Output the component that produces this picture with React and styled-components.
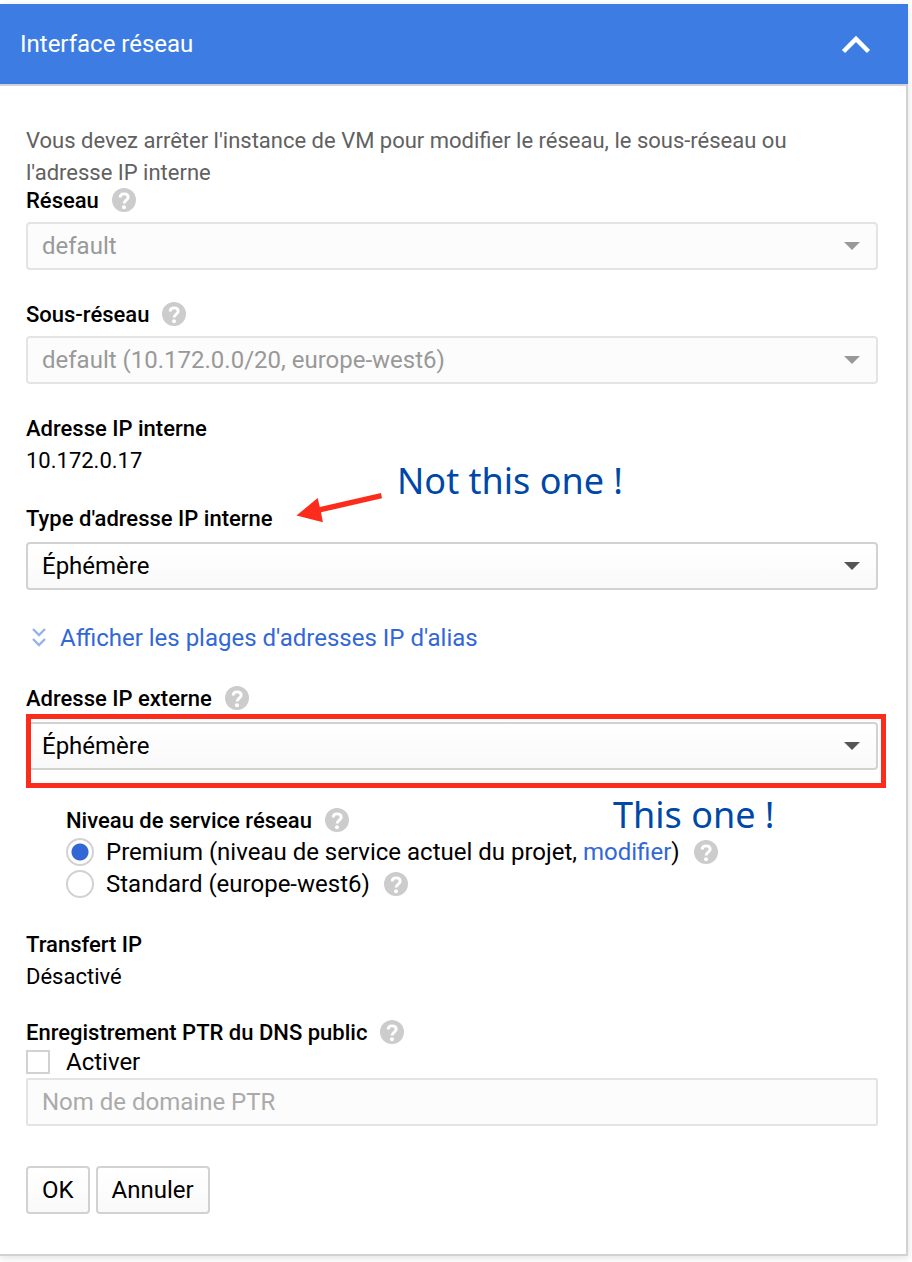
import React, { useState } from "react";
import styled, { createGlobalStyle } from "styled-components";

const GlobalStyle = createGlobalStyle`
  * { box-sizing: border-box; }
  body {
    margin: 0;
    background: #fff;
    color: #000;
    font-family: Roboto, "Liberation Sans", sans-serif;
    font-size: 24px;
    line-height: 32px;
  }
`;

const Page = styled.main`
  padding: 4px 4px 6px 0;
`;

const Panel = styled.section`
  background: #fff;
  box-shadow: 0 2px 8px rgba(0, 0, 0, 0.12);
`;

const Header = styled.header`
  display: flex;
  align-items: center;
  justify-content: space-between;
  height: 80px;
  padding: 0 36px 0 20px;
  background: #3d7de3;
  color: #fff;
`;

const Title = styled.h1`
  margin: 0;
  font-size: 24px;
  font-weight: 400;
`;

const CollapseButton = styled.button`
  display: flex;
  padding: 0;
  border: 0;
  background: none;
  color: inherit;
  cursor: pointer;
`;

const Body = styled.form`
  padding: 38px 28px 40px 26px;
  border: solid #d2d2d2;
  border-width: 2px 2px 2px 0;
`;

const Notice = styled.p`
  max-width: 800px;
  height: 64px;
  margin: 0;
  padding-top: 1px;
  color: #616161;
  font-size: 22px;
`;

const Field = styled.div`
  position: relative;
  margin-top: ${(p) => p.$before ?? 32}px;
  padding-left: ${(p) => (p.$indented ? 40 : 0)}px;
`;

const LabelRow = styled.div`
  display: flex;
  align-items: center;
  gap: 13px;
  height: 24px;
  margin-bottom: ${(p) => p.$after}px;
`;

const FieldLabel = styled.label`
  padding-top: 2px;
  font-size: 22px;
  font-weight: 500;
`;

const Value = styled.div`
  height: 32px;
  padding-top: 1px;
  font-size: 22px;
`;

const HelpButton = styled.button`
  display: flex;
  padding: 0;
  border: 0;
  background: none;
  cursor: pointer;
`;

const SelectFrame = styled.div`
  position: relative;
  color: ${(p) => (p.$disabled ? "#999" : "#555")};
`;

const Select = styled.select`
  display: block;
  width: 100%;
  height: 48px;
  padding: 0 48px 0 14px;
  border: 2px solid #d2d2d2;
  border-radius: 4px;
  appearance: none;
  background: linear-gradient(#fff, #f9f9f9);
  color: #000;
  font: inherit;

  &:disabled {
    border-color: #e4e4e4;
    background: #fcfcfc;
    color: #999;
    opacity: 1;
  }
`;

const SelectArrow = styled.svg`
  position: absolute;
  top: 20px;
  right: 18px;
  pointer-events: none;
`;

const TextLink = styled.a`
  color: #3367d6;
  text-decoration: none;
`;

const AliasLink = styled(TextLink)`
  display: flex;
  align-items: center;
  gap: 14px;
  margin-top: 32px;
  padding-left: 6px;
`;

const Option = styled.div`
  display: flex;
  align-items: center;
  height: 32px;
`;

const OptionHelp = styled.span`
  margin-left: 14px;
`;

const Radio = styled.input`
  width: 28px;
  height: 28px;
  margin: 0 12px 0 0;
  border: 2px solid #d2d2d2;
  border-radius: 50%;
  appearance: none;
  background: #fff;

  &:checked {
    background: radial-gradient(circle, #3367d6 8px, #fff 9px);
  }
`;

const Checkbox = styled.input`
  width: 24px;
  height: 24px;
  margin: 0 16px 0 0;
  border: 2px solid #d2d2d2;
  appearance: none;
  background: #fff;

  &:checked {
    background: #3367d6;
  }
`;

const OptionLabel = styled.label`
  white-space: pre;
`;

const TextInput = styled.input`
  display: block;
  width: 100%;
  height: 48px;
  padding: 0 14px;
  border: 2px solid #e4e4e4;
  border-radius: 2px;
  background: #fcfcfc;
  font: inherit;

  &::placeholder {
    color: #aaa;
    opacity: 1;
  }
`;

const Actions = styled.div`
  display: flex;
  gap: 6px;
  margin-top: 40px;
`;

const ActionButton = styled.button`
  height: 48px;
  padding: 0 14px;
  border: 2px solid #d2d2d2;
  border-radius: 4px;
  background: linear-gradient(#fff, #f9f9f9);
  color: #000;
  font: inherit;
  cursor: pointer;
`;

const Annotation = styled.span`
  position: absolute;
  top: ${(p) => p.$top}px;
  left: ${(p) => p.$left}px;
  color: #0048a8;
  font-family: "Noto Sans", "Open Sans", sans-serif;
  font-size: 36px;
  line-height: 48px;
  white-space: nowrap;
  pointer-events: none;
`;

const AnnotationArrow = styled.svg`
  position: absolute;
  top: -16px;
  left: 268px;
  pointer-events: none;
`;

const Highlight = styled.div`
  position: absolute;
  inset: 28px -8px -18px 0;
  border: 5px solid #fc2c1c;
  pointer-events: none;
`;

function Help({ topic }) {
  return (
    <HelpButton type="button" aria-label={`Aide : ${topic}`}>
      <svg width="24" height="24" viewBox="0 0 24 24" aria-hidden="true">
        <circle cx="12" cy="12" r="12" fill="#ccc" />
        <path
          d="M8.200 9.500C8.200 7.200 9.800 5.900 12.100 5.900s4.100 1.300 4.100 3.400c0 2.700-4.100 3.100-4.100 6.300"
          fill="none"
          stroke="#fff"
          strokeWidth="2.900"
        />
        <circle cx="12" cy="19.2" r="2" fill="#fff" />
      </svg>
    </HelpButton>
  );
}

function Dropdown({ id, value, disabled }) {
  return (
    <SelectFrame $disabled={disabled}>
      <Select id={id} disabled={disabled}>
        <option>{value}</option>
      </Select>
      <SelectArrow width="16" height="8" viewBox="0 0 16 8" aria-hidden="true">
        <path d="M0 0h16L8 8z" fill="currentColor" />
      </SelectArrow>
    </SelectFrame>
  );
}

export default function App() {
  const [tier, setTier] = useState("premium");
  const [ptr, setPtr] = useState(false);

  return (
    <Page>
      <GlobalStyle />
      <Panel>
        <Header>
          <Title>Interface réseau</Title>
          <CollapseButton type="button" aria-label="Réduire">
            <svg width="32" height="24" viewBox="0 0 32 24" aria-hidden="true">
              <path d="M3.5 19.5L16 7l12.500 12.500" fill="none" stroke="#fff" strokeWidth="4.500" />
            </svg>
          </CollapseButton>
        </Header>
        <Body onSubmit={(e) => e.preventDefault()}>
          <Notice>
            Vous devez arrêter l'instance de VM pour modifier le réseau, le sous-réseau ou l'adresse IP interne
          </Notice>

          <Field $before={0}>
            <LabelRow $after={10}>
              <FieldLabel htmlFor="network">Réseau</FieldLabel>
              <Help topic="réseau" />
            </LabelRow>
            <Dropdown id="network" value="default" disabled />
          </Field>

          <Field>
            <LabelRow $after={10}>
              <FieldLabel htmlFor="subnet">Sous-réseau</FieldLabel>
              <Help topic="sous-réseau" />
            </LabelRow>
            <Dropdown id="subnet" value="default (10.172.0.0/20, europe-west6)" disabled />
          </Field>

          <Field>
            <LabelRow $after={4}>
              <FieldLabel as="span">Adresse IP interne</FieldLabel>
            </LabelRow>
            <Value>10.172.0.17</Value>
          </Field>

          <Field $before={30}>
            <LabelRow $after={12}>
              <FieldLabel htmlFor="internal-type">Type d'adresse IP interne</FieldLabel>
            </LabelRow>
            <Dropdown id="internal-type" value="Éphémère" />
            <AnnotationArrow width="92" height="36" viewBox="0 0 92 36" aria-hidden="true">
              <path d="M2.500 25.500L23.700 8L25.800 16.900L87 3L88 8.300L27 22.300L28.900 32.200z" fill="#fc2c1c" />
            </AnnotationArrow>
            <Annotation $top={-49} $left={371}>Not this one !</Annotation>
          </Field>

          <AliasLink href="#alias">
            <svg width="14" height="20" viewBox="0 0 14 20" aria-hidden="true">
              <path d="M1 1l6 6 6-6M1 11l6 6 6-6" fill="none" stroke="#94b2ec" strokeWidth="2.400" />
            </svg>
            Afficher les plages d'adresses IP d'alias
          </AliasLink>

          <Field>
            <LabelRow $after={12}>
              <FieldLabel htmlFor="external-ip">Adresse IP externe</FieldLabel>
              <Help topic="adresse IP externe" />
            </LabelRow>
            <Dropdown id="external-ip" value="Éphémère" />
            <Highlight />
          </Field>

          <Field $before={38} $indented role="radiogroup" aria-labelledby="tier-label">
            <LabelRow $after={4}>
              <FieldLabel as="span" id="tier-label">Niveau de service réseau</FieldLabel>
              <Help topic="niveau de service réseau" />
            </LabelRow>
            <Option>
              <Radio
                type="radio"
                id="premium"
                name="tier"
                checked={tier === "premium"}
                onChange={() => setTier("premium")}
              />
              <OptionLabel htmlFor="premium">{"Premium (niveau de service actuel du projet, "}</OptionLabel>
              <TextLink href="#modifier">modifier</TextLink>)
              <OptionHelp><Help topic="premium" /></OptionHelp>
            </Option>
            <Option>
              <Radio
                type="radio"
                id="standard"
                name="tier"
                checked={tier === "standard"}
                onChange={() => setTier("standard")}
              />
              <OptionLabel htmlFor="standard">Standard (europe-west6)</OptionLabel>
              <OptionHelp><Help topic="standard" /></OptionHelp>
            </Option>
            <Annotation $top={-17} $left={587}>This one !</Annotation>
          </Field>

          <Field>
            <LabelRow $after={4}>
              <FieldLabel as="span">Transfert IP</FieldLabel>
            </LabelRow>
            <Value>Désactivé</Value>
          </Field>

          <Field $before={28}>
            <LabelRow $after={2}>
              <FieldLabel htmlFor="ptr-name">Enregistrement PTR du DNS public</FieldLabel>
              <Help topic="enregistrement PTR" />
            </LabelRow>
            <Option>
              <Checkbox type="checkbox" id="ptr" checked={ptr} onChange={() => setPtr(!ptr)} />
              <OptionLabel htmlFor="ptr">Activer</OptionLabel>
            </Option>
            <TextInput id="ptr-name" placeholder="Nom de domaine PTR" disabled={!ptr} />
          </Field>

          <Actions>
            <ActionButton type="submit">OK</ActionButton>
            <ActionButton type="button">Annuler</ActionButton>
          </Actions>
        </Body>
      </Panel>
    </Page>
  );
}
